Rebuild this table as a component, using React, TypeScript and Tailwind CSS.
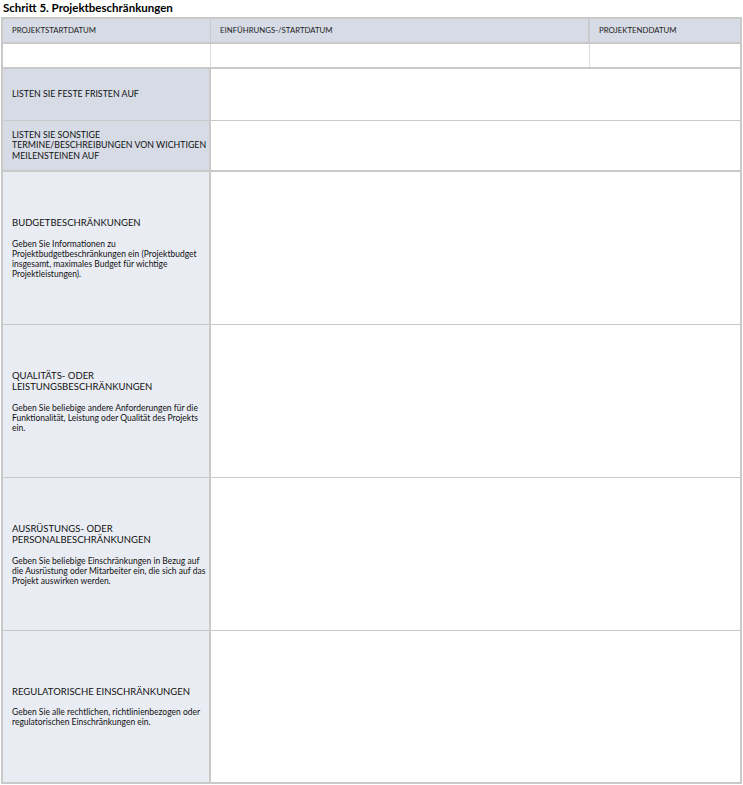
import React from "react";

const font = { fontFamily: "Lato, 'Noto Sans', sans-serif" };

function Block({ title, desc }: { title: React.ReactNode; desc: string }) {
  return (
    <div className="grid grid-cols-[208px_1fr] h-[153px] border-b border-[#c9c9c9]">
      <div className="bg-[#e9ecf3] border-r-2 border-[#c9c9c9] flex flex-col justify-center pl-[9px]">
        <div className="text-[9.5px] leading-[11.5px] text-[#111] whitespace-nowrap">{title}</div>
        <div className="mt-[10px] text-[8.5px] leading-[10px] text-[#111]">{desc}</div>
      </div>
      <div className="bg-white" />
    </div>
  );
}

export default function App() {
  return (
    <div className="bg-white w-[743px] h-[785px]" style={font}>
      <div className="pl-[3px] pt-[1px] h-[17px] text-[11.5px] leading-[14px] font-bold text-black">
        Schritt 5. Projektbeschränkungen
      </div>
      <div className="ml-[1px] w-[741px] border-2 border-[#c9c9c9]">
        <div className="grid grid-cols-[208px_379px_1fr] h-[25px] bg-[#d6dbe5] border-b-2 border-[#c9c9c9] text-[7.8px] text-[#222]">
          <div className="flex items-center pl-[9px] border-r border-[#c9c9c9]">PROJEKTSTARTDATUM</div>
          <div className="flex items-center pl-[9px] border-r-2 border-[#c9c9c9]">EINFÜHRUNGS-/STARTDATUM</div>
          <div className="flex items-center pl-[9px]">PROJEKTENDDATUM</div>
        </div>
        <div className="grid grid-cols-[208px_379px_1fr] h-[25px] bg-white border-b-2 border-[#c9c9c9]">
          <div className="border-r border-[#dcdcdc]" />
          <div className="border-r border-[#dcdcdc]" />
          <div />
        </div>
        <div className="grid grid-cols-[208px_1fr] h-[52px] border-b border-[#c9c9c9]">
          <div className="bg-[#d6dbe5] border-r-2 border-[#c9c9c9] flex items-center pl-[9px] text-[8.8px] leading-[10.5px] text-[#111]">
            LISTEN SIE FESTE FRISTEN AUF
          </div>
          <div />
        </div>
        <div className="grid grid-cols-[208px_1fr] h-[51px] border-b-2 border-[#c9c9c9]">
          <div className="bg-[#d6dbe5] border-r-2 border-[#c9c9c9] flex items-center pl-[9px] text-[8.8px] leading-[10.5px] text-[#111] whitespace-nowrap">
            <div>
              LISTEN SIE SONSTIGE
              <br />
              TERMINE/BESCHREIBUNGEN VON WICHTIGEN
              <br />
              MEILENSTEINEN AUF
            </div>
          </div>
          <div />
        </div>
        <Block
          title="BUDGETBESCHRÄNKUNGEN"
          desc="Geben Sie Informationen zu Projektbudgetbeschränkungen ein (Projektbudget insgesamt, maximales Budget für wichtige Projektleistungen)."
        />
        <Block
          title={
            <>
              QUALITÄTS- ODER
              <br />
              LEISTUNGSBESCHRÄNKUNGEN
            </>
          }
          desc="Geben Sie beliebige andere Anforderungen für die Funktionalität, Leistung oder Qualität des Projekts ein."
        />
        <Block
          title={
            <>
              AUSRÜSTUNGS- ODER
              <br />
              PERSONALBESCHRÄNKUNGEN
            </>
          }
          desc="Geben Sie beliebige Einschränkungen in Bezug auf die Ausrüstung oder Mitarbeiter ein, die sich auf das Projekt auswirken werden."
        />
        <div className="grid grid-cols-[208px_1fr] h-[151px]">
          <div className="bg-[#e9ecf3] border-r-2 border-[#c9c9c9] flex flex-col justify-center pl-[9px]">
            <div className="text-[9.5px] leading-[11.5px] text-[#111] whitespace-nowrap">REGULATORISCHE EINSCHRÄNKUNGEN</div>
            <div className="mt-[10px] text-[8.5px] leading-[10px] text-[#111]">
              Geben Sie alle rechtlichen, richtlinienbezogen oder regulatorischen Einschränkungen ein.
            </div>
          </div>
          <div />
        </div>
      </div>
    </div>
  );
}
